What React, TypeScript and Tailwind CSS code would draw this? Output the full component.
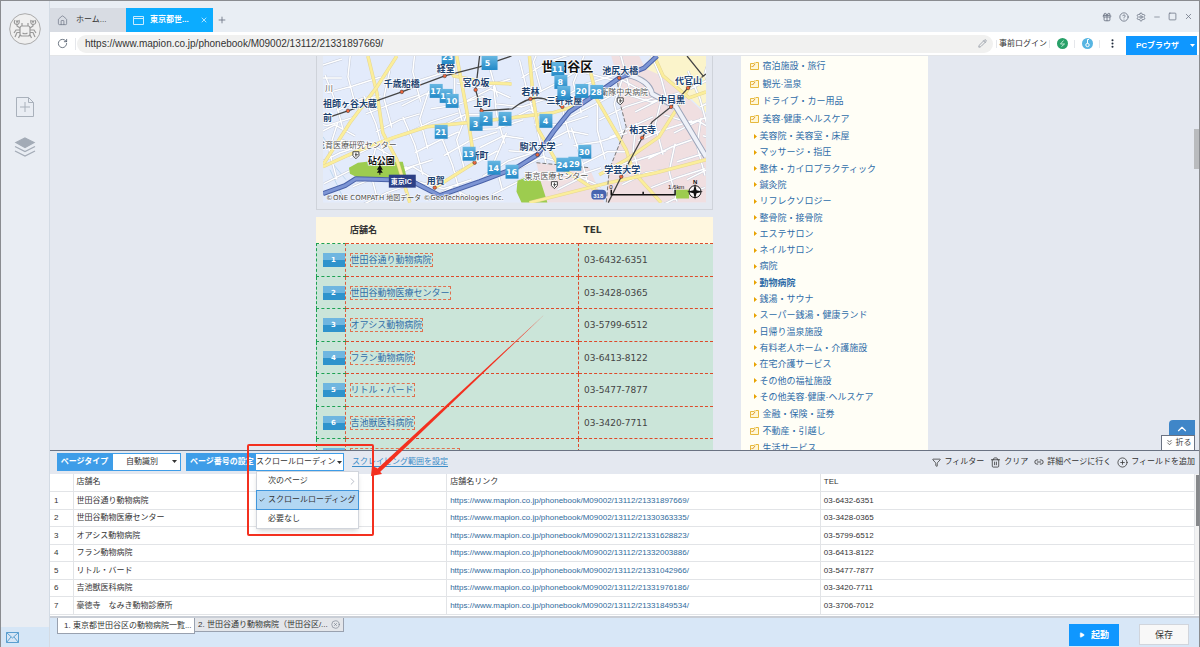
import { useState } from 'react';
import type { ReactNode } from 'react';
import {
    Check,
    ChevronRight,
    ChevronUp,
    ChevronsDown,
    CircleHelp,
    CirclePlus,
    CircleX,
    EllipsisVertical,
    Gift,
    Funnel,
    House,
    Link2,
    Minus,
    Pencil,
    Plus,
    Play,
    RotateCw,
    Settings,
    Square,
    Trash2,
    X,
} from 'lucide-react';

const PAGE_URL = 'https://www.mapion.co.jp/phonebook/M09002/13112/21331897669/';

const clinics = [
    { name: '世田谷通り動物病院', id: '21331897669', tel: '03-6432-6351' },
    { name: '世田谷動物医療センター', id: '21330363335', tel: '03-3428-0365' },
    { name: 'オアシス動物病院', id: '21331628823', tel: '03-5799-6512' },
    { name: 'フラン動物病院', id: '21332003886', tel: '03-6413-8122' },
    { name: 'リトル・バード', id: '21331042966', tel: '03-5477-7877' },
    { name: '吉池獣医科病院', id: '21331976186', tel: '03-3420-7711' },
    { name: '豪徳寺　なみき動物診療所', id: '21331849534', tel: '03-3706-7012' },
];

const topCategories = ['宿泊施設・旅行', '観光·温泉', 'ドライブ・カー用品', '美容·健康·ヘルスケア'];
const bottomCategories = ['金融・保険・証券', '不動産・引越し', '生活サービス'];
const subCategories = [
    '美容院・美容室・床屋',
    'マッサージ・指圧',
    '整体・カイロプラクティック',
    '鍼灸院',
    'リフレクソロジー',
    '整骨院・接骨院',
    'エステサロン',
    'ネイルサロン',
    '病院',
    '動物病院',
    '銭湯・サウナ',
    'スーパー銭湯・健康ランド',
    '日帰り温泉施設',
    '有料老人ホーム・介護施設',
    '在宅介護サービス',
    'その他の福祉施設',
    'その他美容·健康·ヘルスケア',
];

const mapPins: [number, number, string][] = [
    [448, 57, '23'], [491, 63, ''], [488, 63, '5'], [436, 91, '17'], [446, 96, '12'], [452, 101, '10'],
    [441, 132, '21'], [476, 124, '3'], [486, 119, '2'], [505, 119, '1'], [469, 154, '13'],
    [494, 168, '14'], [512, 172, '16'], [558, 69, '11'], [561, 82, '8'], [564, 93, '9'],
    [582, 91, '20'], [597, 92, '28'], [546, 121, '4'], [585, 152, '30'], [575, 164, '29'], [563, 165, '24'],
];

const stationNames: [number, number, string][] = [
    [437, 72, '経堂'], [384, 87, '千歳船橋'], [463, 86, '宮の坂'], [323, 107, '祖師ヶ谷大蔵'],
    [323, 121, '前'], [474, 106, '上町'], [471, 159, '新町'], [427, 184, '用賀'],
    [603, 74, '池尻大橋'], [676, 84, '代官山'], [522, 95, '若林'], [547, 104, '三軒茶屋'],
    [659, 103, '中目黒'], [630, 133, '祐天寺'], [520, 150, '駒沢大学'], [605, 173, '学芸大学'],
];

const stationDots: [number, number][] = [
    [445, 76], [402, 92], [348, 111], [476, 90], [482, 111], [475, 163], [435, 188], [531, 99],
    [563, 107], [620, 78], [538, 155], [622, 177], [643, 138], [672, 107], [689, 88],
];

const mainRoads = [
    'M368 56 L377 93 L383 133 L397 160 L410 203',
    'M397 56 L377 87 L350 123 L323 165',
    'M323 167 L360 150 L393 138 L427 127 L467 123 L520 117 L553 113 L580 105',
    'M445 60 L454 76 L490 83 L512 84',
    'M457 56 L467 110 L475 163 L435 188',
    'M590 67 L598 100 L627 150 L634 172 L662 203',
    'M530 56 L534 100 L539 130 L560 167 L600 193',
    'M707 160 L657 173 L610 183 L530 203',
    'M690 87 L677 110 L660 137 L627 160 L600 175',
    'M655 56 L664 76 L690 98 L707 92',
];

const streets = Array.from({ length: 34 }, (_, i) => {
    const x = 312 + i * 13;
    const y = 60 + ((i * 47) % 120);
    const bend = Math.round(Math.sin(i * 2) * 12);
    return `M${x} ${y - 32} l${bend} 28 l8 30 M${x - 24} ${y + 12} l26 ${bend - 4} l28 -9 M${x - 14} ${y + 30} l24 -12 l20 ${bend}`;
}).join(' ');

function AreaMap() {
    return (
        <svg viewBox="323 56 384 147" className="block w-full" role="img" aria-label="世田谷区の地図">
            <rect x="323" y="56" width="384" height="147" fill="#e3ebfb" />
            <path d="M612 56 L618 77 L620 100 L627 127 L610 170 L607 203 H707 V115 L672 82 L645 66 L640 56Z" fill="#f0dfe1" />
            <path d="M537 163 L590 168 L605 203 H546Z" fill="#f0dfe1" />
            <path d="M652 56 H707 V113 L672 80 L645 68Z" fill="#fbf4cb" />
            <path d="M323 137 l8 12 l1 14 l14 17 M330 170 l14 30" fill="none" stroke="#bdd8ee" />
            <path d={streets} fill="none" stroke="#c6ccda" strokeWidth="2.500" />
            <path d={streets} fill="none" stroke="#fff" strokeWidth="1.500" />
            <path d="M349 168 L358 163 L367 162 H403 L407 178 H365 L358 178 L350 174Z M518 181 L528 177 L541 181 L548 203 H522 L517 192Z M677 190 H690 V199 H677Z" fill="#9dcc4f" />
            {mainRoads.map((d) => (
                <g key={d} fill="none">
                    <path d={d} stroke="#e6d694" strokeWidth="3.500" />
                    <path d={d} stroke="#fbee9b" strokeWidth="2.500" />
                </g>
            ))}
            <path d="M628 75 Q650 80 653 94 L677 107 L707 157" fill="none" stroke="#9aa3b8" strokeWidth="6" />
            <path d="M628 75 Q650 80 653 94 L677 107 L707 157" fill="none" stroke="#eef1f8" strokeWidth="4" />
            <path d="M618 77 L620 100 L627 127 L610 170 L607 203 M537 163 L590 168" fill="none" stroke="#777" strokeDasharray="4 2" />
            <path
                d="M323 194 L345 186 L356 179 L390 180 L413 182 L440 196 L480 182 L517 168 L538 155 L554 132 L570 112 L600 92 L620 78 L645 68 L658 56"
                fill="none" stroke="#4a62a8" strokeWidth="5" strokeLinejoin="round"
            />
            <path
                d="M323 194 L345 186 L356 179 L390 180 L413 182 L440 196 L480 182 L517 168 L538 155 L554 132 L570 112 L600 92 L620 78 L645 68 L658 56"
                fill="none" stroke="#7d95d4" strokeWidth="3" strokeLinejoin="round"
            />
            <path d="M330 117 L348 111 L402 92 L445 76 L480 67 L512 56 M480 56 L476 90 L482 111 L513 109 Q530 95 545 99 L563 107 M609 203 L622 177 L643 138 L653 122 L672 107 L689 88 L707 74 M688 56 L704 76" fill="none" stroke="#444" strokeWidth="1.3" />
            {stationDots.map(([x, y]) => (
                <circle key={`${x}-${y}`} cx={x} cy={y} r="1.8" fill="#f0663c" stroke="#333" strokeWidth=".5" />
            ))}
            <g fontSize="8" fill="#555" stroke="#fff" strokeWidth="1.5" paintOrder="stroke">
                <text x="317" y="148">成育医療研究センター</text>
                <text x="601" y="95">衛隊中央病院</text>
                <text x="525" y="179">東京医療センター</text>
                <text x="325" y="91">川</text>
            </g>
            <g fontSize="9" fontWeight="700" fill="#1d4370" stroke="#fff" strokeWidth="1.500" paintOrder="stroke">
                {stationNames.map(([x, y, name]) => (
                    <text key={name} x={x} y={y}>{name}</text>
                ))}
                <text x="368" y="164" fill="#111">砧公園</text>
                <text x="542" y="71" fontSize="13" fill="#111">世田谷区</text>
            </g>
            <path d="M380 165 l3 5 h-2 l2 3 h-2.500 v2 h-1 v-2 h-2.500 l2 -3 h-2Z" fill="#111" />
            {[[356, 155], [621, 101], [555, 185]].map(([x, y]) => (
                <g key={x} fill="none" stroke="#444">
                    <path d={`M${x - 3} ${y - 3} h6 v4 l-3 3 l-3 -3Z`} fill="#fff" />
                    <path d={`M${x - 1} ${y} h3 M${x} ${y - 2} v4`} />
                </g>
            ))}
            <rect x="389" y="175" width="27" height="13" fill="#2c3f86" />
            <text x="391" y="184" fontSize="7" fontWeight="700" fill="#fff">東京IC</text>
            <rect x="592" y="190" width="15" height="10" rx="4" fill="#4865b0" />
            <text x="594" y="198" fontSize="6" fontWeight="700" fill="#fff">318</text>
            <path d="M612 190 v5 h64 v-5 M644 192 v3" fill="none" stroke="#111" strokeWidth="1.5" />
            <g fontSize="6" fill="#111">
                <text x="610" y="189">0</text>
                <text x="669" y="189">1.6km</text>
                <text x="694" y="184" fontWeight="700">N</text>
            </g>
            <circle cx="696" cy="192" r="6" fill="#fff" fillOpacity=".7" stroke="#111" />
            <path d="M696 184 l1.500 6.500 l6.500 1.500 l-6.500 1.500 l-1.500 6.500 l-1.500 -6.500 l-6.500 -1.500 l6.500 -1.500Z" fill="#111" />
            <defs>
                <linearGradient id="pin" x1="0" y1="0" x2="0" y2="1">
                    <stop offset="0" stopColor="#67b7e2" />
                    <stop offset="1" stopColor="#2389c7" />
                </linearGradient>
            </defs>
            {mapPins.map(([x, y, n]) => (
                <g key={`${x}-${y}`}>
                    <rect x={x - 6} y={y - 7} width="13" height="14" fill="url(#pin)" />
                    <text x={x} y={y + 3} textAnchor="middle" fontSize="8" fontWeight="700" fill="#fff" fontFamily="DejaVu Sans">{n}</text>
                </g>
            ))}
            <text x="326" y="200" fontSize="7" fill="#444" stroke="#fff" strokeWidth="1" paintOrder="stroke" fontFamily="DejaVu Sans, Noto Sans CJK JP">
                ©ONE COMPATH 地図データ ©GeoTechnologies Inc.
            </text>
        </svg>
    );
}

function CrabLogo() {
    return (
        <svg viewBox="0 0 32 32" className="h-8 w-8" fill="none" stroke="#999" strokeWidth="1.2">
            <circle cx="16" cy="16" r="15.300" fill="#f0f0f0" stroke="#aaa" strokeWidth="1" />
            <rect x="11" y="13" width="10" height="10" rx="2" />
            <path d="M13 13 V10 M19 13 V10 M13.500 20 q2.500 1.500 5 0 M11 15 L8 13 V11 M21 15 L24 13 V11" />
            <path d="M6 7 Q4 11 8 11.500 Q11 11 10 7 M7.500 7.500 L8 9.500 L9 7.500 M22 7 Q21 11 24 11.500 Q28 11 26 7 M23 7.500 L24 9.500 L25 7.500" />
            <path d="M11 17 H7 L5 20 M11 19.500 H8 L6 24 M11 22 L9.500 25 M21 17 H25 L27 20 M21 19.500 H24 L26 24 M21 22 L22.500 25" />
        </svg>
    );
}

function SideRail() {
    return (
        <nav className="flex w-12 shrink-0 flex-col items-center bg-[#e9edf3] pt-3">
            <CrabLogo />
            <button aria-label="新規タスク" className="mt-[52px]">
                <svg width="18" height="20" viewBox="0 0 18 20" fill="none" stroke="#a9b1bb">
                    <path d="M.5 .5 H12.500 L17.500 5.500 V19.500 H.5Z M12.500 .5 V5.500 H17.500 M9 5 V15 M4 10 H14" />
                </svg>
            </button>
            <button aria-label="タスク一覧" className="mt-5">
                <svg width="22" height="20" viewBox="0 0 22 20" fill="none" stroke="#a3abb6" strokeWidth="1.300">
                    <path d="M11 1 L20 5.500 L11 10.500 L2 5.500Z" fill="#a3abb6" />
                    <path d="M1 9.500 L11 14.500 L21 9.500 M1 14 L11 19 L21 14" />
                </svg>
            </button>
            <div className="mt-auto flex h-5 w-full items-center bg-[#d6e6f6] pl-[5px]">
                <button aria-label="メール">
                    <svg width="13" height="11" viewBox="0 0 13 11" fill="none" stroke="#5a9fd0">
                        <path d="M.5 .5 H12.500 V10.500 H.5Z M.5 .5 L6.500 6 L12.500 .5 M.5 10.500 L5 5 M12.500 10.500 L8 5" />
                    </svg>
                </button>
            </div>
        </nav>
    );
}

function TitleBar() {
    return (
        <header className="flex h-[31px] items-end bg-[#e9eef4]">
            <button className="flex h-6 w-[76px] items-center gap-2 bg-[#d8dce3] pl-[7px]">
                <House size={11} strokeWidth={1.5} className="text-gray-500" />
                ホーム...
            </button>
            <button className="flex h-6 w-[87px] items-center bg-[#0cacff] pl-[7px] font-bold text-white">
                <svg width="11" height="9" viewBox="0 0 11 9" fill="none" stroke="#c9ecff">
                    <path d="M.5 .5 H10.500 V8.500 H.5Z M.5 2.500 H10.500" />
                </svg>
                <span className="ml-[6px]">東京都世...</span>
                <X size={8} className="ml-auto mr-[5px]" />
            </button>
            <button aria-label="新しいタブ" className="flex h-6 w-[18px] items-center justify-center text-gray-500">
                <Plus size={10} />
            </button>
            <div className="ml-auto flex h-full items-center gap-[7px] pr-[6px] text-gray-500">
                <button aria-label="ギフト"><Gift size={10} strokeWidth={2} /></button>
                <button aria-label="ヘルプ"><CircleHelp size={10} strokeWidth={2} /></button>
                <button aria-label="設定"><Settings size={10} strokeWidth={2} /></button>
                <button aria-label="最小化"><Minus size={8} /></button>
                <button aria-label="最大化"><Square size={9} /></button>
                <button aria-label="閉じる"><X size={9} /></button>
            </div>
        </header>
    );
}

function AddressBar() {
    return (
        <div className="flex h-6 items-center border-b border-[#e3e5e8] bg-white pr-[2px]">
            <button aria-label="再読み込み" className="ml-[7px] text-gray-600"><RotateCw size={11} strokeWidth={1.7} /></button>
            <span className="ml-[7px] h-3 w-px bg-gray-200" />
            <label className="ml-px flex h-[18px] min-w-0 flex-1 items-center rounded-full bg-[#f1f1f0] pl-2 pr-[6px]">
                <input aria-label="URL" defaultValue={PAGE_URL} className="min-w-0 flex-1 bg-transparent text-[10px] leading-4 text-[#333] outline-none" />
                <Pencil size={9} strokeWidth={1.5} className="text-gray-500" />
            </label>
            <span className="ml-[3px] h-2 w-px bg-gray-200" />
            <button className="ml-[2px]">事前ログイン</button>
            <span className="ml-[2px] h-2 w-px bg-gray-200" />
            <button aria-label="高速モード" className="ml-[7px] flex h-[11px] w-[11px] items-center justify-center rounded-full bg-[#28a068]">
                <svg width="7" height="7" viewBox="0 0 7 7" fill="none" stroke="#bfe8d3"><path d="M4.500 .5 L1.500 4 H5.500 L2.500 6.500" /></svg>
            </button>
            <span className="ml-[6px] h-2 w-px bg-gray-200" />
            <button aria-label="認証" className="ml-[7px] flex h-[11px] w-[11px] items-center justify-center rounded-full bg-[#57b5e2]">
                <svg width="7" height="9" viewBox="0 0 7 9" fill="none" stroke="#fff"><circle cx="3.500" cy="6" r="1.700" /><path d="M3.500 4.500 V.5 H5" /></svg>
            </button>
            <span className="ml-[6px] h-2 w-px bg-gray-200" />
            <button aria-label="メニュー" className="ml-[7px] text-gray-800"><EllipsisVertical size={11} strokeWidth={2.5} /></button>
            <button className="ml-2 flex h-[19px] w-[71px] items-center self-end bg-[#0f97ff] pl-[10px] font-bold text-white">
                PCブラウザ
                <span className="ml-auto mr-[2px]"><Caret /></span>
            </button>
        </div>
    );
}

function Caret() {
    return <svg width="5" height="3" viewBox="0 0 5 3" fill="currentColor"><path d="M0 0 H5 L2.500 3Z" /></svg>;
}

function CategoryRow({ name }: { name: string }) {
    return (
        <li className="flex items-center gap-[4px]">
            <svg width="9" height="8" viewBox="0 0 9 8" fill="#fff7d6" stroke="#e6b93f">
                <path d="M.5 1.500 H4 L5 .5 V1.500 M6 .5 H8.500 V7.500 H.5 V1.500" />
                <path d="M1.500 4 L2.500 5 L5 2" stroke="#e09a2c" fill="none" />
            </svg>
            <a href="#category">{name}</a>
        </li>
    );
}

function CategoryList() {
    return (
        <aside className="w-[187px] bg-[#fffef6] pl-[9px] pt-px text-[9px] leading-4 text-[#2e6ca8]">
            <ul className="grid h-[71px]">
                {topCategories.map((name) => <CategoryRow key={name} name={name} />)}
            </ul>
            <ul className="grid h-[277px] pl-1">
                {subCategories.map((name) => (
                    <li key={name} className="flex items-center gap-[3px]">
                        <svg width="3" height="5" viewBox="0 0 3 5" fill="#e8a200"><path d="M0 0 L3 2.500 L0 5Z" /></svg>
                        <a href="#sub" className={name === '動物病院' ? 'font-bold' : ''}>{name}</a>
                    </li>
                ))}
            </ul>
            <ul className="grid h-[52px]">
                {bottomCategories.map((name) => <CategoryRow key={name} name={name} />)}
            </ul>
        </aside>
    );
}

function ClinicTable() {
    return (
        <table className="mt-[7px] w-full table-fixed border-collapse text-left font-['DejaVu_Sans','Noto_Sans_CJK_JP',sans-serif] text-[9px] leading-3 text-[#444]">
            <colgroup>
                <col className="w-[29px]" />
                <col />
                <col className="w-[134px]" />
            </colgroup>
            <thead>
                <tr className="h-[27px] bg-[#fff7df] text-[#333]">
                    <th />
                    <th className="pl-[5px]">店舗名</th>
                    <th className="pl-[5px]">TEL</th>
                </tr>
            </thead>
            <tbody>
                {clinics.map((c, i) => (
                    <tr key={c.id} className="bg-[#cbe5d9] odd:h-[33px] even:h-8">
                        <td className="border-y border-l border-dashed border-y-[#1ca152] border-l-[#1ca152] border-r border-r-[#dd5a3a] p-0">
                            <span className="ml-[6px] flex h-[14px] items-center justify-center bg-linear-to-b from-[#6fb6e0] from-50% to-[#2f93cc] to-50% text-[7px] font-bold text-white">
                                {i + 1}
                            </span>
                        </td>
                        <td className="border-y border-r border-dashed border-[#dd4a2a] p-0 pl-[4px]">
                            <a href="#clinic" className="inline-block border border-dashed border-[#e0704f] text-[#2e6ca8]">{c.name}</a>
                        </td>
                        <td className="border-y border-dashed border-[#dd4a2a] p-0 pl-[5px]">{c.tel}</td>
                    </tr>
                ))}
            </tbody>
        </table>
    );
}

function BrowserView() {
    return (
        <main className="relative min-h-0 flex-1 overflow-hidden bg-[#e4e8f0]">
            <div className="flex justify-center gap-7 pr-[6px]">
                <div className="w-[397px]">
                    <div className="border border-t-0 border-[#cfd3da] px-[6px] pb-[6px]">
                        <AreaMap />
                    </div>
                    <ClinicTable />
                </div>
                <CategoryList />
            </div>
            <div className="absolute right-0 top-[73px] h-10 w-[5px] bg-[#b9bbbe]" />
            <button aria-label="トップへ" className="absolute bottom-[14px] right-1 flex h-4 w-[26px] items-end justify-center rounded-tl-sm bg-[#3f86c8] text-white">
                <ChevronUp size={14} />
            </button>
            <button className="absolute bottom-0 right-1 flex h-[15px] w-[34px] items-center justify-center gap-[2px] border border-b-0 border-gray-500 bg-white text-[#444]">
                <ChevronsDown size={9} />
                折る
            </button>
        </main>
    );
}

// 設定箇所を示す赤枠と矢印
function Callout() {
    return (
        <div className="pointer-events-none absolute -left-2 -top-[9px] z-30 h-[92px] w-[127px] rounded-xs border-2 border-[#f3301f]">
            <svg width="174" height="166" viewBox="0 0 174 166" className="absolute -top-[134px] left-[122px]" fill="#f3301f">
                <path d="M174 2 L8 161 L5 158Z" />
                <path d="M0 164 L1 154 L6 156 L11 162Z" />
            </svg>
        </div>
    );
}

function PagingSelect() {
    const [open, setOpen] = useState(true);
    return (
        <div className="relative z-20">
            <button
                role="combobox"
                aria-expanded={open}
                aria-labelledby="paging-label"
                onClick={() => setOpen(!open)}
                className="flex h-[18px] w-[89px] items-center justify-between overflow-hidden border border-[#3e9de8] bg-white pr-px whitespace-nowrap"
            >
                スクロールローディン
                <span className="shrink-0"><Caret /></span>
            </button>
            {open && (
                <ul role="listbox" className="absolute left-px top-[18px] w-[103px] border border-gray-300 bg-white shadow-md">
                    <li role="option" aria-selected="false" className="flex h-[18px] items-center justify-between pl-[11px]">
                        次のページ
                        <ChevronRight size={11} strokeWidth={1.5} className="text-gray-400" />
                    </li>
                    <li role="option" aria-selected="true" className="-mx-px flex h-5 items-center gap-[3px] border border-[#4196dc] bg-[#b3d7f3] pl-[2px] whitespace-nowrap">
                        <Check size={6} strokeWidth={3} />
                        スクロールローディング
                    </li>
                    <li role="option" aria-selected="false" className="flex h-[18px] items-center pl-[11px]">必要なし</li>
                </ul>
            )}
            <Callout />
        </div>
    );
}

function ToolButton({ icon, children }: { icon: ReactNode; children: ReactNode }) {
    return (
        <button className="flex items-center gap-[3px] whitespace-nowrap">
            {icon}
            {children}
        </button>
    );
}

function Toolbar() {
    return (
        <div className="flex h-6 items-center border-t border-gray-500 bg-[#e4e8f0] pl-[7px] pr-1">
            <label htmlFor="page-type" className="flex h-[18px] w-[55px] items-center justify-center bg-[#3e9de8] font-bold text-white">ページタイプ</label>
            <div className="relative">
                <select id="page-type" className="h-[18px] w-[69px] appearance-none border border-[#3e9de8] bg-white pl-[13px]">
                    <option>自動識別</option>
                </select>
                <span className="pointer-events-none absolute right-1 top-[7px] flex"><Caret /></span>
            </div>
            <span id="paging-label" className="ml-[5px] flex h-[18px] w-[69px] items-center overflow-hidden bg-[#3e9de8] pl-1 font-bold whitespace-nowrap text-white">ページ番号の設定</span>
            <PagingSelect />
            <a href="#range" className="ml-2 text-[#3a8cc8] underline underline-offset-2">スクレイピング範囲を設定</a>
            <div className="ml-auto flex items-center gap-[6px]">
                <ToolButton icon={<Funnel size={9} />}>フィルター</ToolButton>
                <ToolButton icon={<Trash2 size={11} strokeWidth={1.7} />}>クリア</ToolButton>
                <ToolButton icon={<Link2 size={10} />}>詳細ページに行く</ToolButton>
                <ToolButton icon={<CirclePlus size={11} strokeWidth={1.7} />}>フィールドを追加</ToolButton>
            </div>
        </div>
    );
}

function ResultTable() {
    return (
        <div className="flex border-b-2 border-[#c9ced6] bg-white pb-px">
            <table className="w-full table-fixed border-collapse text-left leading-3">
                <colgroup>
                    <col className="w-[23px]" />
                    <col />
                    <col />
                    <col />
                </colgroup>
                <thead>
                    <tr className="h-[18px] border-b border-[#e2e4e7]">
                        <th />
                        <th className="border-l border-[#e2e4e7] p-0 pl-[3px] font-normal">店舗名</th>
                        <th className="border-l border-[#e2e4e7] p-0 pl-[3px] font-normal">店舗名リンク</th>
                        <th className="border-l border-[#e2e4e7] p-0 pl-[3px] font-normal">TEL</th>
                    </tr>
                </thead>
                <tbody>
                    {clinics.map((c, i) => (
                        <tr key={c.id} className="border-b border-[#e2e4e7] odd:h-[18px] even:h-[17px]">
                            <td className="p-0 pl-1">{i + 1}</td>
                            <td className="border-l border-[#e2e4e7] p-0 pl-[3px]">{c.name}</td>
                            <td className="border-l border-[#e2e4e7] p-0 pl-[3px]">
                                <a href="#link" className="text-[#2f6b9c]">{`https://www.mapion.co.jp/phonebook/M09002/13112/${c.id}/`}</a>
                            </td>
                            <td className="border-l border-[#e2e4e7] p-0 pl-[3px]">{c.tel}</td>
                        </tr>
                    ))}
                </tbody>
            </table>
            <div className="w-[5px] shrink-0 border-l border-gray-200 bg-[#f2f2f2] pl-px pt-px">
                <div className="h-[51px] w-full bg-[#86888b]" />
            </div>
        </div>
    );
}

function Footer() {
    return (
        <footer className="flex h-[29px] items-start bg-[#d8e7f7] pl-[7px] pr-[10px]">
            <button className="flex h-4 w-[138px] items-center border border-t-0 border-gray-400 bg-white pl-[6px] whitespace-nowrap">1. 東京都世田谷区の動物病院一覧...</button>
            <button className="flex h-[14px] items-center gap-[3px] border border-l-0 border-t-0 border-gray-400 bg-[#e4e6ea] px-[3px] whitespace-nowrap">
                2. 世田谷通り動物病院（世田谷区/...
                <CircleX size={9} strokeWidth={1.5} className="text-gray-500" />
            </button>
            <div className="ml-auto flex gap-5 pt-[6px] text-[9px]">
                <button className="flex h-[22px] w-[50px] items-center justify-center gap-[6px] bg-[#0f97ff] font-bold text-white">
                    <Play size={6} fill="currentColor" />
                    起動
                </button>
                <button className="h-[21px] w-[50px] border border-gray-300 bg-[#f8f8f8]">保存</button>
            </div>
        </footer>
    );
}

export default function App() {
    return (
        <div className="flex h-screen overflow-hidden border-x border-t border-[#8a8c90] font-['Liberation_Sans','Noto_Sans_CJK_JP',sans-serif] text-[8px] leading-3 text-[#333]">
            <SideRail />
            <div className="flex min-w-0 flex-1 flex-col border-l border-[#d3dbe4]">
                <TitleBar />
                <AddressBar />
                <BrowserView />
                <section className="relative">
                    <Toolbar />
                    <ResultTable />
                    <Footer />
                </section>
            </div>
        </div>
    );
}
